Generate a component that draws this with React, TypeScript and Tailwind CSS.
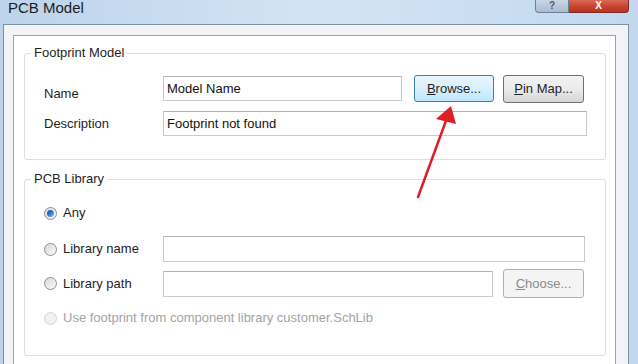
import React from 'react'

const font = { fontFamily: '"Liberation Sans", Arial, sans-serif' }

const Radio = ({ checked = false, disabled = false }: { checked?: boolean; disabled?: boolean }) => {
    if (disabled) {
        return <span className="w-[13px] h-[13px] rounded-full border border-[#d4d4d4] bg-[#f1f1f1] shrink-0" />
    }
    return (
        <span className="w-[13px] h-[13px] rounded-full border border-[#8e8f8f] bg-gradient-to-br from-[#d8d8d8] to-[#fbfbfb] flex items-center justify-center shrink-0">
            {checked && (
                <span className="w-[7px] h-[7px] rounded-full bg-gradient-to-br from-[#0b4a8e] via-[#2a7ed3] to-[#8fc8f4]" />
            )}
        </span>
    )
}

const Group = ({ title, className, children }: { title: string; className: string; children: React.ReactNode }) => (
    <div className={`relative border border-[#d5dfe5] rounded-[3px] ${className}`}>
        <span className="absolute left-[6px] top-[-9px] px-[3px] bg-white leading-[16px] text-[13px] text-[#1e1e1e]">
            {title}
        </span>
        {children}
    </div>
)

const inputCls = 'h-[25px] border border-[#c9c9c9] border-t-[#b3b3b3] bg-white px-[3px] text-[13px] leading-[23px] text-[#111]'

const App = () => {
    return (
        <div
            className="relative w-[638px] h-[364px] overflow-hidden bg-gradient-to-r from-[#bdd3eb] via-[#d4e4f4] to-[#c2d8ef]"
            style={font}
        >
            {/* title bar */}
            <div className="h-[24px] flex pl-[8px]">
                <span className="text-[15px] leading-[15px] text-[#1b1b1b]">PCB Model</span>
                <div className="ml-auto mr-[9px] flex h-[13px]">
                    <div className="w-[34px] h-full rounded-bl-[4px] border border-t-0 border-[#6d7f93] bg-gradient-to-b from-[#c9d6e4] to-[#a9bcd1] flex items-center justify-center">
                        <span className="text-[10px] leading-[10px] font-bold text-[#4b5b6b]">?</span>
                    </div>
                    <div className="w-[60px] h-full rounded-br-[4px] border border-t-0 border-l-0 border-[#7e2a22] bg-gradient-to-b from-[#d86a58] via-[#c94532] to-[#b83420] flex items-center justify-center">
                        <span className="text-[10px] leading-[10px] font-bold text-white">X</span>
                    </div>
                </div>
            </div>

            {/* frame */}
            <div className="ml-[3px] w-[626px] h-[340px] border-l border-t border-r border-[#7d8fa3] bg-[#f1f3f6] pt-[10px] pl-[9px] pr-[12px]">
                <div className="h-[340px] border border-[#a0a0a0] bg-white pt-[17px] pl-[10px] pr-[9px] text-[13px] text-[#1e1e1e]">
                    <Group title="Footprint Model" className="h-[107px] pt-[20px]">
                        <div className="flex items-center h-[29px] pl-[19px]">
                            <span className="w-[119px] mt-[11px]">Name</span>
                            <div className={`${inputCls} w-[239px]`}>Model Name</div>
                            <button className="ml-[12px] w-[80px] h-[27px] rounded-[3px] border border-[#3c7fb1] bg-gradient-to-b from-[#eaf6fd] via-[#d9f0fc] to-[#bee6fd] text-[13px] text-[#1e1e1e]">
                                <span className="underline">B</span>rowse...
                            </button>
                            <button className="ml-[9px] w-[81px] h-[28px] rounded-[3px] border border-[#707070] bg-gradient-to-b from-[#f2f2f2] via-[#ebebeb] to-[#d5d5d5] text-[13px] text-[#1e1e1e]">
                                <span className="underline">P</span>in Map...
                            </button>
                        </div>
                        <div className="flex items-center h-[25px] mt-[8px] pl-[19px]">
                            <span className="w-[119px]">Description</span>
                            <div className={`${inputCls} w-[424px]`}>Footprint not found</div>
                        </div>
                    </Group>

                    <Group title="PCB Library" className="mt-[19px] h-[177px] pt-[23px]">
                        <div className="flex items-center h-[20px] pl-[19px] gap-[6px]">
                            <Radio checked />
                            <span>Any</span>
                        </div>
                        <div className="flex items-center h-[26px] mt-[13px] pl-[19px]">
                            <div className="w-[119px] flex items-center gap-[6px]">
                                <Radio />
                                <span>Library name</span>
                            </div>
                            <div className={`${inputCls} h-[26px] w-[422px]`} />
                        </div>
                        <div className="flex items-center h-[29px] mt-[7px] pl-[19px]">
                            <div className="w-[119px] flex items-center gap-[6px]">
                                <Radio />
                                <span>Library path</span>
                            </div>
                            <div className={`${inputCls} h-[26px] w-[330px]`} />
                            <button className="ml-[10px] w-[81px] h-[29px] rounded-[3px] border border-[#adb2b5] bg-[#f4f4f4] text-[13px] text-[#8a8a8a]">
                                <span className="underline">C</span>hoose...
                            </button>
                        </div>
                        <div className="flex items-center h-[20px] mt-[10px] pl-[19px] gap-[6px] text-[#a3a3a3]">
                            <Radio disabled />
                            <span>Use footprint from component library customer.SchLib</span>
                        </div>
                    </Group>
                </div>
            </div>

            {/* red annotation arrow */}
            <svg className="absolute left-0 top-0 pointer-events-none" width="638" height="364">
                <line x1="418" y1="197" x2="447" y2="118" stroke="#dc1e25" strokeWidth="2.5" strokeLinecap="round" />
                <polygon points="451,106 436,119 456,124" fill="#dc1e25" />
            </svg>
        </div>
    )
}

export default App
